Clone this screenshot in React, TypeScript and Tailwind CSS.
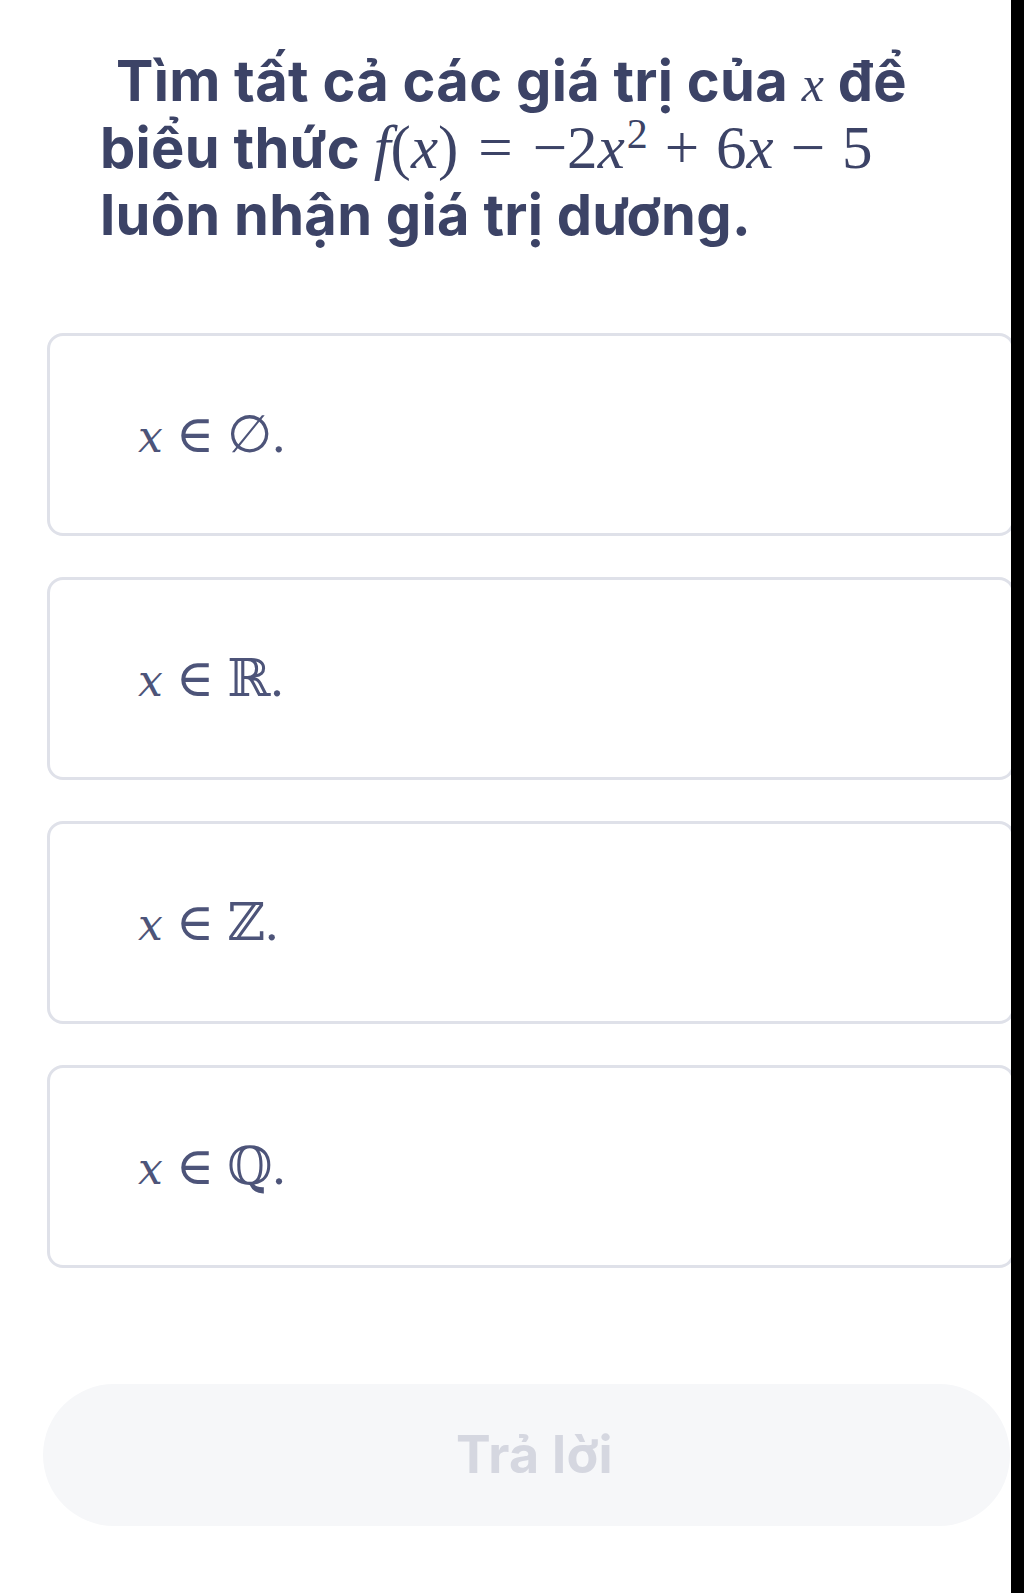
import React from "react";

const mathFont = "[font-family:'Liberation_Serif','DejaVu_Serif',serif]";
const optX = "[font-family:'DejaVu_Serif',serif] italic text-[44px]";

function Option({ children }: { children: React.ReactNode }) {
  return (
    <div className="h-[203px] rounded-[16px] border-[3px] border-[#dfe1e9] bg-white flex items-center pl-[88px]">
      <span className={`${mathFont} text-[52px] leading-none text-[#4d5479] whitespace-pre`}>{children}</span>
    </div>
  );
}

export default function App() {
  return (
    <div className="flex w-[1024px] min-h-[1593px] bg-white">
      <div className="w-[1011px] overflow-hidden pt-[48px]">
        <h1 className="pl-[100px] pr-[30px] [font-family:Inter,'Noto_Sans',sans-serif] font-bold text-[56px] leading-[67px] text-[#3c4366] tracking-[0.3px]">
          <span className="pl-[16px]">Tìm tất cả các giá trị của </span>
          <span className={`${mathFont} italic font-normal text-[50px] leading-none`}>x</span>
          <span> để</span>
          <br />
          <span>biểu thức </span>
          <span className={`${mathFont} font-normal text-[61px] leading-none tracking-normal whitespace-nowrap`}>
            <i>f</i>(<i>x</i>)<span className="mx-[20px]">=</span>−2<i>x</i>
            <sup className="text-[42px] leading-none relative -top-[20px] ml-[2px]">2</sup>
            <span className="mx-[17px]">+</span>6<i>x</i>
            <span className="mx-[17px]">−</span>5
          </span>
          <br />
          <span>luôn nhận giá trị dương.</span>
        </h1>

        <div className="mt-[84px] ml-[47px] -mr-[4px] flex flex-col gap-[41px]">
          <Option>
            <span className={optX}>x</span> ∈ ∅.
          </Option>
          <Option>
            <span className={optX}>x</span> ∈ ℝ.
          </Option>
          <Option>
            <span className={optX}>x</span> ∈ ℤ.
          </Option>
          <Option>
            <span className={optX}>x</span> ∈ ℚ.
          </Option>
        </div>

        <div className="mt-[116px] ml-[43px] mr-[1px] h-[142px] rounded-full bg-[#f6f7f9] flex items-center justify-center pl-[16px]">
          <span className="[font-family:Inter,'Noto_Sans',sans-serif] font-bold text-[52px] text-[#d5d7e0] tracking-[0.3px]">
            Trả lời
          </span>
        </div>
      </div>
      <div className="w-[13px] bg-black" />
    </div>
  );
}
